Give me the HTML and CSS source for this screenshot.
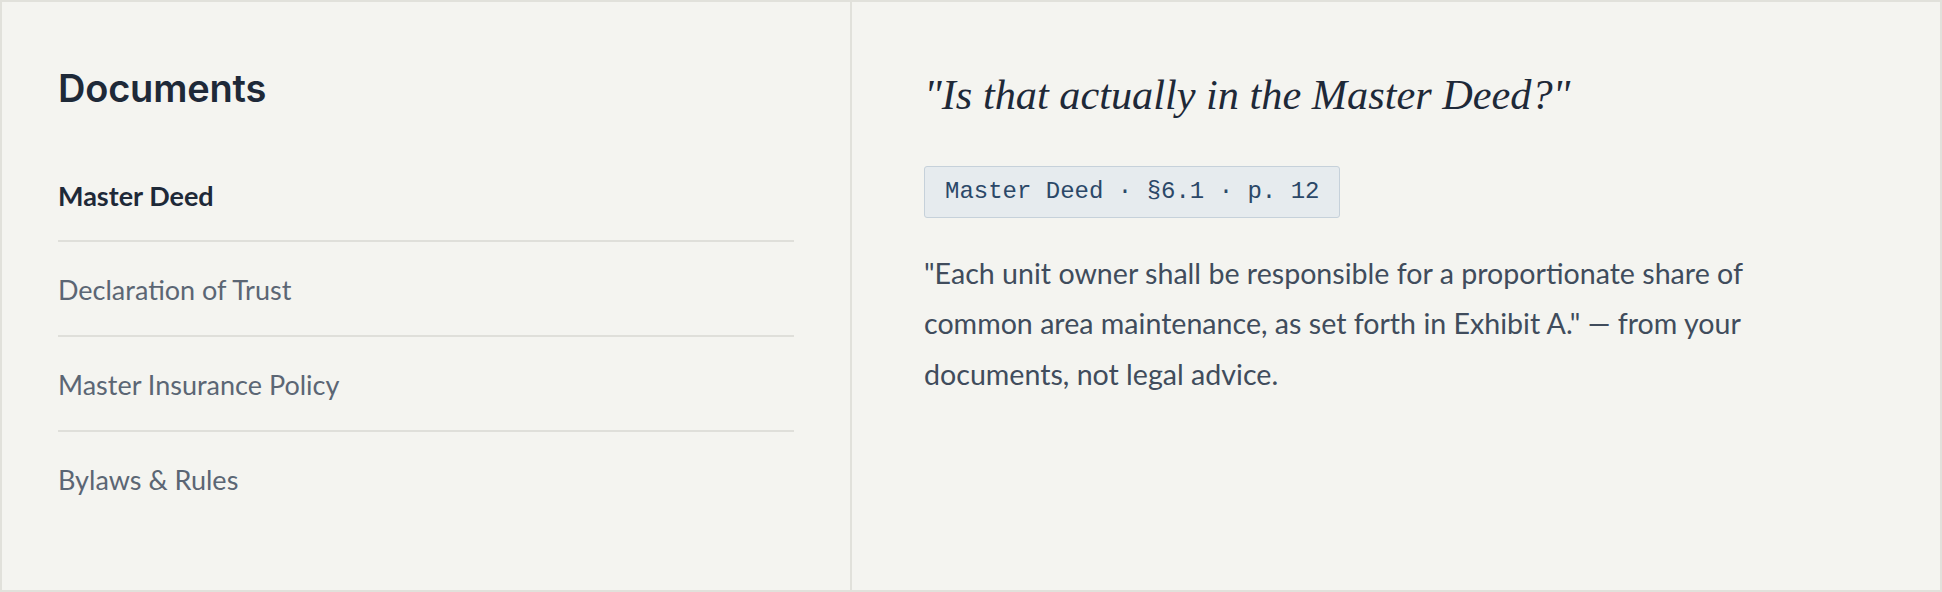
FILE: index.html
```html
<!DOCTYPE html>
<html lang="en">
<head>
<meta charset="utf-8">
<title>Documents</title>
<link rel="stylesheet" href="styles.css">
</head>
<body>
<div class="frame">
  <aside class="docs">
    <h2 class="docs-title">Documents</h2>
    <ul class="doc-list">
      <li class="doc-item is-active">Master Deed</li>
      <li class="doc-item">Declaration of Trust</li>
      <li class="doc-item">Master Insurance Policy</li>
      <li class="doc-item">Bylaws &amp; Rules</li>
    </ul>
  </aside>
  <main class="answer">
    <h1 class="question">"Is that actually in the Master Deed?"</h1>
    <div class="cite">Master Deed · §6.1 · p. 12</div>
    <p class="quote">"Each unit owner shall be responsible for a proportionate share of common area maintenance, as set forth in Exhibit A." — from your documents, not legal advice.</p>
  </main>
</div>
</body>
</html>
```
FILE: styles.css
```css
* { box-sizing: border-box; }
html, body { margin: 0; padding: 0; }
body {
  background: #f4f4f0;
  font-family: "Lato", "Noto Sans", sans-serif;
}
.frame {
  width: 1942px;
  height: 592px;
  border: 2px solid #e1e1db;
  background: #f4f4f0;
  display: grid;
  grid-template-columns: 850px 1fr;
}
.docs {
  border-right: 2px solid #e1e1db;
  padding: 64px 56px 0 56px;
}
.docs-title {
  margin: 0 0 34px 0;
  font-family: "Inter", "Lato", sans-serif;
  font-weight: 600;
  font-size: 38px;
  line-height: 1.2;
  color: #1e2938;
  letter-spacing: -0.2px;
}
.doc-list {
  list-style: none;
  margin: 0;
  padding: 0;
}
.doc-item {
  padding: 28px 0 25px 0;
  font-size: 27px;
  line-height: 40px;
  color: #5b6674;
  border-bottom: 2px solid #dfdfda;
}
.doc-item:last-child { border-bottom: none; }
.doc-item.is-active {
  color: #1e2938;
  font-weight: 700;
  padding-top: 30px;
  padding-bottom: 24px;
}
.answer {
  padding: 68px 72px 0 72px;
}
.question {
  margin: 0 0 45px 0;
  font-family: "Liberation Serif", "Times New Roman", serif;
  font-style: italic;
  font-weight: 400;
  font-size: 42.3px;
  line-height: 1.2;
  color: #1e2938;
}
.cite {
  display: inline-block;
  padding: 11px 20px;
  font-family: "Liberation Mono", "DejaVu Sans Mono", monospace;
  font-size: 24px;
  line-height: 28px;
  color: #2b4868;
  background: #e6ebee;
  border: 1.5px solid #c6d1da;
  border-radius: 3px;
}
.quote {
  margin: 30px 0 0 0;
  max-width: 880px;
  font-size: 28.6px;
  line-height: 50.5px;
  color: #404c5c;
}
```
